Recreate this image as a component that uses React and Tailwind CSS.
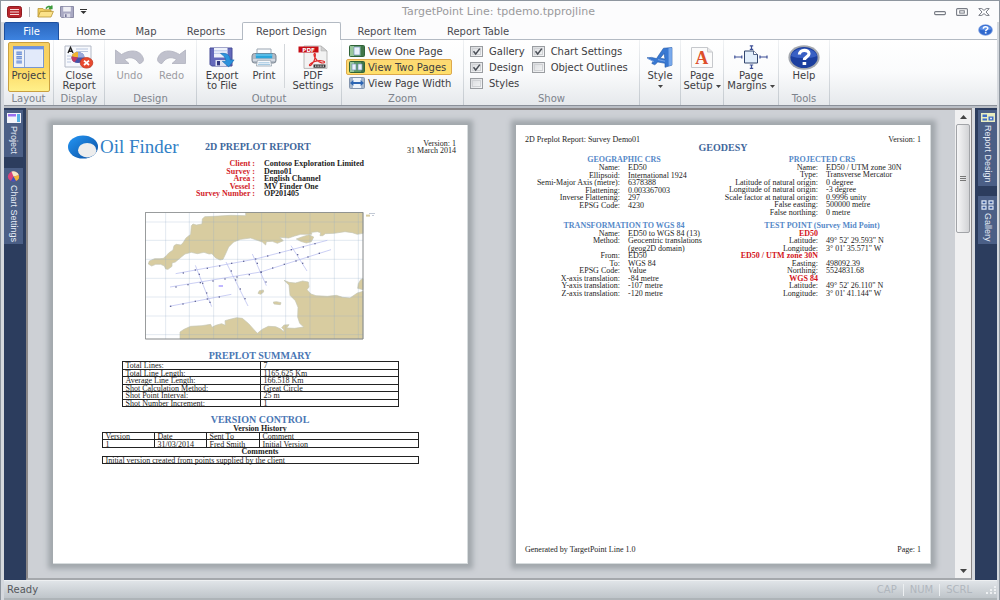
import React from 'react';

/* ---------- small building blocks ---------- */

function BigButton({ icon, label, second, active, disabled, menu, className = '' }) {
  return (
    <button
      type="button"
      disabled={disabled}
      className={`flex h-[50px] flex-col items-center rounded-xs border text-[10px] leading-[10px] ${
        active
          ? 'border-[#c9a040] bg-linear-to-b from-[#f6cf62] via-[#fbd65f] to-[#fff08a]'
          : 'border-transparent'
      } ${disabled ? 'text-[#9c9ca2]' : 'text-[#3d3d42]'} ${className}`}
    >
      <span className="flex h-[28px] items-center justify-center">{icon}</span>
      <span className="whitespace-nowrap">{label}</span>
      {second && (
        <span className="flex items-center gap-[3px] whitespace-nowrap">
          {second}
          {menu && <Caret />}
        </span>
      )}
      {!second && menu && (
        <span className="flex h-[10px] items-center">
          <Caret />
        </span>
      )}
    </button>
  );
}

function Caret() {
  return (
    <svg width="5" height="3" viewBox="0 0 5 3" aria-hidden="true">
      <path d="M0 0h5L2.5 3z" fill="#444" />
    </svg>
  );
}

function Group({ title, className, children }) {
  return (
    <section className="flex shrink-0">
      <div className={`flex flex-col items-center pt-[2px] ${className}`}>
        <div className="flex h-[51px] w-full justify-center">{children}</div>
        <h2 className="text-[10px] leading-[12px] text-[#7d838c]">{title}</h2>
      </div>
      <div className="w-px bg-linear-to-b from-[#f0f2f4] to-[#c3c9cf]" />
    </section>
  );
}

function Check({ label, checked }) {
  return (
    <label className="flex h-4 items-center gap-[6px] whitespace-nowrap">
      <span className="relative flex">
        <input
          type="checkbox"
          defaultChecked={checked}
          className="peer h-[11px] w-[13px] appearance-none border border-[#9a9da1] bg-linear-to-br from-[#d9dbde] to-[#f6f7f8] outline-1 -outline-offset-3 outline-[#d0d2d5]"
        />
        <svg
          viewBox="0 0 13 11"
          className="pointer-events-none absolute inset-0 hidden h-[11px] w-[13px] peer-checked:block"
        >
          <path d="M3.5 5.2 5.7 8 9.8 2.6" fill="none" stroke="#4a4f57" strokeWidth="1.5" />
        </svg>
      </span>
      {label}
    </label>
  );
}

function ViewRow({ icon, label, active }) {
  return (
    <button
      type="button"
      className={`flex h-4 items-center gap-[3px] self-start rounded-xs border pr-[5px] pl-[2px] whitespace-nowrap ${
        active
          ? 'border-[#dda94c] bg-linear-to-b from-[#fcd873] to-[#ffe06a]'
          : 'border-transparent'
      }`}
    >
      {icon}
      {label}
    </button>
  );
}

/* ---------- icons ---------- */

const AppIcon = () => (
  <svg width="15" height="12" viewBox="0 0 15 12">
    <rect x=".5" y=".5" width="14" height="11" rx="2" fill="#b8252c" stroke="#8f1a20" />
    <path d="M3 3.5h9M3 6h9M3 8.5h9" stroke="#f6dcdc" strokeWidth="1.2" />
  </svg>
);

const OpenIcon = () => (
  <svg width="17" height="13" viewBox="0 0 17 13">
    <path d="M1 12V3.5h5l1.2 1.3H14V7" fill="#f1cf62" stroke="#b89434" strokeWidth=".8" />
    <path d="M1 12 3.4 6.4h13L14 12z" fill="#fbe28a" stroke="#b89434" strokeWidth=".8" />
    <path d="M9 3.6C10.5 1 13 1 14 2.4M14.8.4v3h-3" fill="none" stroke="#3c9a3c" strokeWidth="1.6" />
  </svg>
);

const SaveIcon = () => (
  <svg width="14" height="12" viewBox="0 0 14 12">
    <path d="M.5.5h13v11h-12l-1-1z" fill="#a9a9c3" stroke="#8b8ba6" />
    <path d="M3.2.8h7.6v4.7H3.2z" fill="#f0f0f5" />
    <path d="M3.8 7.6h6.4v3.8H3.8z" fill="#dcdce8" />
    <path d="M5 8.3h1.6v2.6H5z" fill="#77779a" />
  </svg>
);

const ProjectIcon = () => (
  <svg width="31" height="22" viewBox="0 0 31 22">
    <rect x=".5" y=".5" width="30" height="21" fill="#f4f7fc" stroke="#7896cf" />
    <path d="M1 1h29v2.4H1z" fill="#6a93e6" />
    <path d="M1.5 4h9v17h-9z" fill="#eef1f5" />
    <path d="M11.5 4v17" stroke="#90a8d4" />
    <path d="M12 4h17.5v17H12z" fill="#e2eafa" />
    <path d="M3.4 5.5h5.5v3.4H3.4zM3.4 10h5.5v3.2H3.4zM3.4 14.4h5.5v3H3.4z" fill="#6f92d8" />
    <path d="M3.4 7.2h5.5M3.4 11.6h5.5M3.4 16h5.5" stroke="#c9d8f4" strokeWidth=".6" />
  </svg>
);

const CloseReportIcon = () => (
  <svg width="30" height="24" viewBox="0 0 30 24">
    <path d="M1 1h26v21H1z" fill="#f7f9fd" stroke="#b3b9c6" />
    <path d="m4 8 2.5-5.500L9 8M4.800 6.300h3.500" fill="none" stroke="#222" strokeWidth="1.4" />
    <path d="M12 4h12M12 6.5h12M3 11h4M3 14h4M3 17h4" stroke="#b9c6de" />
    <ellipse cx="14" cy="12.5" rx="6.5" ry="5.6" fill="#4753a6" />
    <path d="M14 12.5V6.9a6.5 5.6 0 0 1 6.5 5.6z" fill="#9aa9da" />
    <path d="m14 12.5-6.4-1a6.5 5.6 0 0 1 6.4-4.6z" fill="#f2b52f" />
    <path d="m14 12.5-3.5 4.8a6.5 5.6 0 0 1-2.9-5.8z" fill="#c43b63" />
    <ellipse cx="22.5" cy="17.8" rx="6.3" ry="5.3" fill="#e8492f" stroke="#c1371f" strokeWidth=".8" />
    <path d="m20 15.6 5 4.4m0-4.4-5 4.4" stroke="#fff" strokeWidth="1.8" />
  </svg>
);

const UndoIcon = ({ flip }) => (
  <svg width="29" height="16" viewBox="0 0 29 16" className={flip ? '-scale-x-100' : ''}>
    <path
      d="M.5 1v13.500H14L9.500 10.500C14 7.500 20 8 24 14.500c1.500.5 4.500-1.500 4.500-4C27 2 17-1 6.500 5.500z"
      fill="#c0c1cd"
      stroke="#b0b1be"
      strokeWidth=".8"
    />
  </svg>
);

const ExportIcon = () => (
  <svg width="26" height="21" viewBox="0 0 26 21">
    <path d="M1 1h22v18H2.6L1 17.4z" fill="#6469bb" stroke="#474c96" />
    <path d="M5 1h13.5v9.5H5z" fill="#eef2fb" />
    <path d="M5 3.8h13.5M5 6.4h13.5" stroke="#b9c7ea" />
    <path d="M6.5 13h11v6h-11z" fill="#dfe3f2" />
    <path d="M8 14h3v4.4H8z" fill="#353a82" />
    <path d="M11.5 6.5c6-.8 9.6 1.5 9.8 6.4h3.8l-5.4 7-6.4-5.6h3.5c0-3-1.4-5.4-5.3-7.8z" fill="#2c93dd" stroke="#1b6cae" strokeWidth=".6" />
  </svg>
);

const PrintIcon = () => (
  <svg width="26" height="19" viewBox="0 0 26 19">
    <path d="M6 1h14v7H6z" fill="#fafcfe" stroke="#9aa5b1" />
    <rect x="1" y="5.5" width="24" height="9.5" rx="2.5" fill="#b1bac5" stroke="#7d8793" />
    <path d="M4.8 5.7h16.4v4.6H4.8z" fill="#2aa6dc" />
    <path d="M4.8 7h16.4" stroke="#85d2f2" />
    <path d="M2 12h22" stroke="#e5e9ee" strokeWidth="1.4" />
    <path d="m6.4 12.3-1 5.7h15.2l-1-5.7z" fill="#f6f8fb" stroke="#98a3af" strokeWidth=".8" />
    <path d="M7.5 14.8h11M7 16.6h12" stroke="#9cc4df" />
  </svg>
);

const PdfIcon = () => (
  <svg width="31" height="24" viewBox="0 0 31 24">
    <path d="M6 1h17l6 5v17.4H6z" fill="#f2f2f2" stroke="#aaa" strokeWidth=".8" />
    <path d="m23 1 6 5h-6z" fill="#cfcfcf" stroke="#aaa" strokeWidth=".5" />
    <path d="M.5 1.5h20v6H.5z" fill="#c60d14" />
    <text x="10.6" y="6.6" textAnchor="middle" fontSize="5.6" fontWeight="700" fill="#fff">PDF</text>
    <path
      d="M16.5 8.6c-1.5 1 .1 4 2.5 6.8 2.2 2.4 7.2 3.4 7.6 1.8.4-1.7-6-1.9-9.6-.8-3 1-6.2 3-5.5 4 .9 1.3 4-2.4 5.1-6 .8-2.8 1.2-6.6-.1-5.8z"
      fill="none"
      stroke="#e02a2a"
      strokeWidth="1.2"
    />
    <path d="M15.5 19.5h12v3.2h-12z" fill="#333" />
    <path d="M17 21.2h9.2" stroke="#ddd" strokeWidth="1.2" strokeDasharray="1 .6" />
  </svg>
);

const OnePageIcon = ({ two }) => (
  <svg width="16" height="12" viewBox="0 0 16 12">
    <rect x=".5" y=".5" width="15" height="11" rx="1" fill="#5b9a62" stroke="#2f6238" />
    <path d="M1 1h4v10H1z" fill="#98c79b" />
    <path d="M12 1h3v10h-3z" fill="#3f7548" />
    {two ? (
      <path d="M3 3h4v6H3zM9 3h4v6H9z" fill="#eaf1fa" stroke="#7a93bb" strokeWidth=".7" />
    ) : (
      <path d="M5 2h6v8H5z" fill="#eaf1fa" stroke="#7a93bb" strokeWidth=".7" />
    )}
  </svg>
);

const PageWidthIcon = () => (
  <svg width="16" height="12" viewBox="0 0 16 12">
    <rect x=".5" y=".5" width="15" height="11" rx="1" fill="#a6b7cd" stroke="#8294ad" />
    <path d="M4 1h8v10H4z" fill="#edf3fb" />
    <path d="M1 6l3.4-3v2h7.2V3L15 6l-3.4 3V7H4.4v2z" fill="#2d66b4" />
  </svg>
);

const StyleIcon = () => (
  <svg width="28" height="21" viewBox="0 0 28 21">
    <path d="M17.5 1.2 26 .6v17.5l-7 2.2v-4L11.8 15l-3 2.8-3-1.4L7.2 14 1 10.8l4.5-.4 5 1.2zM18 6.4l-3.8 4.8 4.8.9z" fill="#3878d2" stroke="#2258a6" strokeWidth=".6" />
    <path d="m22.5 1.2 3.4-.5v17.4l-3.2 1z" fill="#79a9eb" />
    <path d="M2 11.6l6 3M12 12.6l7 1.6" stroke="#78a4e6" />
  </svg>
);

const SetupIcon = () => (
  <svg width="22" height="21" viewBox="0 0 22 21">
    <path d="M.5.5h16l5 4.5v15.5H.5z" fill="#fbfbfb" stroke="#c6c8cc" />
    <path d="M16.5.5v4.5h5" fill="#e7e8ea" stroke="#c6c8cc" />
    <text x="10.7" y="17.4" textAnchor="middle" fontSize="18" fontWeight="700" fill="#dd4f2a" className="font-['Liberation_Serif',serif]">A</text>
  </svg>
);

const MarginsIcon = () => (
  <svg width="34" height="24" viewBox="0 0 34 24">
    <path d="M10.5 6h9l4 3.5V18h-13z" fill="#e3effb" stroke="#33466e" />
    <path d="M19.5 6v3.5h4" fill="#fff" stroke="#33466e" strokeWidth=".8" />
    <path d="M17.5 .8v3.6M15.8.8h3.4M15.8 4.4h3.4M17.5 20v3.4M15.8 20h3.4M15.8 23.4h3.4M.8 12h7M.8 10.6v2.8M7.8 10.6v2.8M26 12h7M26 10.6v2.8M33 10.6v2.8" stroke="#3d4f96" strokeWidth="1.2" />
  </svg>
);

const HelpIcon = ({ small }) => (
  <svg width={small ? 15 : 32} height={small ? 12 : 25} viewBox="0 0 32 25">
    <ellipse cx="16" cy="12.5" rx="15.6" ry="12.2" fill={small ? '#7d9fe0' : '#a3a7ae'} />
    <ellipse cx="16" cy="12.5" rx="13.6" ry="10.6" fill={small ? '#2f68ce' : '#1c3f9f'} />
    <path d="M3 11C5 1 27 1 29 11 22 14 10 14 3 11z" fill={small ? '#5c8fe6' : '#3960c4'} />
    <path d="M11.4 9.6c0-5.4 9.6-5.4 9.6-.8 0 3.2-4.6 2.8-4.6 6.2" fill="none" stroke="#fff" strokeWidth="3.2" />
    <path d="M14.6 17h3.6v3h-3.6z" fill="#fff" />
  </svg>
);

const ChartBall = () => (
  <svg width="13" height="11" viewBox="0 0 12 11" className="shrink-0">
    <ellipse cx="6" cy="5.5" rx="5.6" ry="5.1" fill="#d9447c" />
    <path d="M6 5.5 4 .6a5.6 5.1 0 0 1 7.4 3.6z" fill="#f4e9c8" />
    <path d="m6 5.5 5.4-1.3a5.6 5.1 0 0 1-3 5.8z" fill="#f0b63a" />
    <path d="m6 5.5 2.4 4.5a5.6 5.1 0 0 1-5 0z" fill="#3b55bd" />
  </svg>
);

/* ---------- side docks ---------- */

function DockTab({ icon, label, className }) {
  return (
    <button
      type="button"
      className={`flex w-[19px] flex-col items-center bg-[#4b5f86] text-[9px] leading-none text-[#e6ecf6] ${className}`}
    >
      {icon}
      <span className="font-['Liberation_Sans',sans-serif] whitespace-nowrap [writing-mode:vertical-rl]">
        {label}
      </span>
    </button>
  );
}

/* ---------- report pages ---------- */

function Sheet({ children, label }) {
  return (
    <article
      aria-label={label}
      className="flex flex-1 flex-col border-r border-b border-[#d7dcde] bg-white text-[8px] leading-[7px] text-[#1c1c1c] shadow-[0_0_5px_5px_#a2a8ad] font-['Liberation_Serif',serif]"
    >
      {children}
    </article>
  );
}

function Rows({ rows, className }) {
  return (
    <dl className={`grid auto-rows-fr ${className}`}>
      {rows.map(([k, v, section], i) => (
        <div key={i} className="grid grid-cols-[95px_1fr] gap-2 whitespace-nowrap">
          <dt className={`text-right ${section ? 'font-bold text-[#d3131b]' : ''}`}>
            <span className="float-right">{k}</span>
          </dt>
          <dd>{v}</dd>
        </div>
      ))}
    </dl>
  );
}

const SURVEY = [
  ['Client :', 'Contoso Exploration Limited'],
  ['Survey :', 'Demo01'],
  ['Area :', 'English Channel'],
  ['Vessel :', 'MV Finder One'],
  ['Survey Number :', 'OP201405'],
];

const SUMMARY = [
  ['Total Lines:', '7'],
  ['Total Line Length:', '1165.625 Km'],
  ['Average Line Length:', '166.518 Km'],
  ['Shot Calculation Method:', 'Great Circle'],
  ['Shot Point Interval:', '25 m'],
  ['Shot Number Increment:', '1'],
];

const LINES = [
  [135, 222, 375, 178], [375, 178, 590, 122], [118, 262, 390, 217], [390, 217, 601, 150],
  [116, 320, 302, 284], [194, 197, 243, 321], [286, 187, 352, 319], [365, 163, 407, 258],
  [481, 138, 529, 214],
];

const SHOTS = [
  [158, 220], [194, 211], [230, 206], [267, 199], [303, 191], [339, 185], [375, 178], [411, 169],
  [447, 159], [482, 150], [518, 142], [553, 132], [136, 262], [172, 255], [209, 249], [247, 244],
  [283, 238], [319, 232], [356, 225], [391, 217], [426, 205], [461, 194], [496, 184], [532, 172],
  [566, 161], [120, 320], [157, 313], [194, 305], [230, 298], [266, 292], [206, 224], [216, 251],
  [228, 280], [238, 308], [302, 214], [315, 241], [329, 268], [343, 297], [380, 191], [392, 218],
  [406, 247], [501, 165], [516, 191],
];

function SurveyMap() {
  return (
    <svg width="219" height="128" viewBox="43 37 657 384" role="img" aria-label="Survey area map">
      <path d="M44 38h653v380H44z" fill="#fff" />
      <g fill="#d8cca0" stroke="#c4c5b4" strokeWidth="2">
        <path d="M345 38v10L300 47 250 50 222 51 215 58 214 73 197 76 187 73 182 78 180 104 166 115 158 128 151 136 137 134 130 138 127 151 114 160 107 168 98 176 88 177 72 177 56 184 53 193 63 199 75 194 90 194 101 199 105 208 112 209 124 200 124 190 134 187 152 172 163 163 182 158 200 162 220 158 235 163 244 162 254 174 268 181 277 179 286 160 294 142 309 127 330 119 360 115 380 122 395 127 405 136 407 126 425 125 440 131 458 123 447 113 474 115 492 109 510 104 543 104 543 98 560 96 570 99 568 108 576 108 584 102 610 101 643 96 665 99 680 104 697 101V38z" />
        <path d="M497 118 516 111 535 105 549 112 542 126 527 130 510 125z" />
        <path d="M382 281 386 273 398 271 399 277 390 284zM428 307 438 306 451 309 449 315 430 313z" />
        <path d="M697 237 690 240 683 252 681 266 697 270z" />
        <path d="M460 242 475 248 494 250 516 244 533 247 535 262 529 270 541 283 556 288 590 290 617 287 636 293 658 295 680 280 697 275V418H148V397L160 389 180 380 214 378 240 374 244 383 255 377 273 372 284 377 283 363 298 359 318 354 335 356 354 372 370 390 380 401 395 389 413 380 435 381 450 388 460 397 459 389 453 384 460 376 475 375 468 385 492 386 519 382 507 371 501 352 502 323 494 303 478 287 475 256z" />
      </g>
      <path
        d="M105 38v380M176 38v380M249 38v380M321 38v380M393 38v380M465 38v380M538 38v380M611 38v380M683 38v380M44 67h653M44 122h653M44 179h653M44 236h653M44 292h653M44 349h653M44 405h653"
        stroke="#8fabc5"
        strokeOpacity=".4"
        strokeWidth="2"
      />
      {LINES.map(([x1, y1, x2, y2], i) => (
        <line key={i} x1={x1} y1={y1} x2={x2} y2={y2} stroke="#b0b7ee" strokeWidth="2" />
      ))}
      {SHOTS.map(([x, y], i) => (
        <rect key={i} x={x - 2} y={y - 2} width="4" height="4" fill="#666a9a" />
      ))}
      <path d="M264 259h13" stroke="#a193ff" strokeWidth="4" />
      <path d="M44 38h653v380H44z" fill="none" stroke="#85888a" strokeWidth="3" />
    </svg>
  );
}

const CELL = 'border border-[#222] pt-px pr-0 pb-0 pl-[3px] text-left font-normal leading-[5px]';

function SummaryPage() {
  return (
    <Sheet label="Preplot report">
      <header className="flex items-center pt-[10px] pr-[11px] pl-[15px]">
        <div className="flex w-[137px] items-center gap-[2px]">
          <svg width="30" height="24" viewBox="0 0 30 24" aria-hidden="true">
            <defs>
              <linearGradient id="ball" x1="0" y1="0" x2="1" y2="1">
                <stop offset="0" stopColor="#2496f5" />
                <stop offset="1" stopColor="#0b4fa0" />
              </linearGradient>
            </defs>
            <ellipse cx="15" cy="12" rx="15" ry="11.5" fill="url(#ball)" />
            <ellipse cx="19.2" cy="15.2" rx="9.2" ry="7.3" fill="#ededed" />
          </svg>
          <span className="text-[19px] leading-[22px] whitespace-nowrap text-[#3180c6]">Oil Finder</span>
        </div>
        <h1 className="text-[10px] leading-[10px] font-bold whitespace-nowrap text-[#3f679c]">2D PREPLOT REPORT</h1>
        <p className="flex-1 text-right whitespace-nowrap">
          Version: 1<br />
          31 March 2014
        </p>
      </header>

      <dl className="mt-px grid h-[38px] auto-rows-fr font-bold">
        {SURVEY.map(([k, v]) => (
          <div key={k} className="grid grid-cols-[202px_1fr] gap-[9px] whitespace-nowrap">
            <dt className="text-right text-[#d3232a]">{k}</dt>
            <dd>{v}</dd>
          </div>
        ))}
      </dl>

      <figure className="mt-[14px] flex justify-center gap-[2px]">
        <SurveyMap />
        <svg width="9" height="7" viewBox="0 0 9 7" aria-hidden="true">
          <path d="M3 1.5h6M6 3.5h2" stroke="#a9b3c4" strokeWidth=".7" />
          <path d="M0 2.6h4v2H0z" fill="#d8cca0" />
        </svg>
      </figure>

      <section className="mt-[11px] flex flex-col items-center">
        <h2 className="text-[10px] leading-[10px] font-bold text-[#4a76b4]">PREPLOT SUMMARY</h2>
        <table className="h-[46px] w-[277px] table-fixed border-collapse">
          <tbody>
            {SUMMARY.map(([k, v]) => (
              <tr key={k}>
                <th scope="row" className={CELL}>{k}</th>
                <td className={CELL}>{v}</td>
              </tr>
            ))}
          </tbody>
        </table>
      </section>

      <section className="mt-2 flex flex-col items-center">
        <h2 className="text-[10px] leading-[10px] font-bold text-[#4a76b4]">VERSION CONTROL</h2>
        <h3 className="leading-[7px] font-bold">Version History</h3>
        <table className="h-[16px] w-[317px] table-fixed border-collapse">
          <colgroup>
            <col className="w-[52px]" />
            <col className="w-[52px]" />
            <col className="w-[53px]" />
            <col />
          </colgroup>
          <thead>
            <tr>
              <th className={CELL}>Version</th>
              <th className={CELL}>Date</th>
              <th className={CELL}>Sent To</th>
              <th className={CELL}>Comment</th>
            </tr>
          </thead>
          <tbody>
            <tr>
              <td className={CELL}>1</td>
              <td className={CELL}>31/03/2014</td>
              <td className={CELL}>Fred Smith</td>
              <td className={CELL}>Initial Version</td>
            </tr>
          </tbody>
        </table>
        <h3 className="leading-[8px] font-bold">Comments</h3>
        <p className={`w-[317px] ${CELL}`}>
          Initial version created from points supplied by the client
        </p>
      </section>
    </Sheet>
  );
}

function GeodesyPage() {
  const heading = 'text-center text-[8px] leading-[8px] font-bold text-[#5588c8]';
  return (
    <Sheet label="Geodesy">
      <header className="pt-[11px] pr-[9px] pl-[9px]">
        <div className="flex justify-between">
          <span>2D Preplot Report: Survey Demo01</span>
          <span>Version: 1</span>
        </div>
        <h1 className="text-center text-[10px] leading-[10px] font-bold text-[#3f679c]">GEODESY</h1>
      </header>
      <div className="mt-[3px] grid flex-1 grid-cols-2 content-start gap-y-[6px] px-[9px]">
        <section className="h-[60px]">
          <h2 className={heading}>GEOGRAPHIC CRS</h2>
          <Rows
            className="h-[45px]"
            rows={[
              ['Name:', 'ED50'],
              ['Ellipsoid:', 'International 1924'],
              ['Semi-Major Axis (metre):', '6378388'],
              ['Flattening:', '0.003367003'],
              ['Inverse Flattening:', '297'],
              ['EPSG Code:', '4230'],
            ]}
          />
        </section>
        <section className="h-[60px]">
          <h2 className={heading}>PROJECTED CRS</h2>
          <Rows
            className="h-[52px]"
            rows={[
              ['Name:', 'ED50 / UTM zone 30N'],
              ['Type:', 'Transverse Mercator'],
              ['Latitude of natural origin:', '0 degree'],
              ['Longitude of natural origin:', '-3 degree'],
              ['Scale factor at natural origin:', '0.9996 unity'],
              ['False easting:', '500000 metre'],
              ['False northing:', '0 metre'],
            ]}
          />
        </section>
        <section>
          <h2 className={heading}>TRANSFORMATION TO WGS 84</h2>
          <Rows
            className="h-[67px]"
            rows={[
              ['Name:', 'ED50 to WGS 84 (13)'],
              ['Method:', 'Geocentric translations'],
              ['', '(geog2D domain)'],
              ['From:', 'ED50'],
              ['To:', 'WGS 84'],
              ['EPSG Code:', 'Value'],
              ['X-axis translation:', '-84 metre'],
              ['Y-axis translation:', '-107 metre'],
              ['Z-axis translation:', '-120 metre'],
            ]}
          />
        </section>
        <section>
          <h2 className={heading}>TEST POINT (Survey Mid Point)</h2>
          <Rows
            className="h-[67px]"
            rows={[
              ['ED50', '', true],
              ['Latitude:', '49° 52\' 29.593" N'],
              ['Longitude:', '3° 01\' 35.571" W'],
              ['ED50 / UTM zone 30N', '', true],
              ['Easting:', '498092.39'],
              ['Northing:', '5524831.68'],
              ['WGS 84', '', true],
              ['Latitude:', '49° 52\' 26.110" N'],
              ['Longitude:', '3° 01\' 41.144" W'],
            ]}
          />
        </section>
      </div>
      <footer className="flex justify-between pr-[9px] pb-[10px] pl-[9px]">
        <span>Generated by TargetPoint Line 1.0</span>
        <span>Page: 1</span>
      </footer>
    </Sheet>
  );
}

/* ---------- window ---------- */

const TABS = [
  ['Home', 'w-[62px]'],
  ['Map', 'w-[48px]'],
  ['Reports', 'w-[72px]'],
  ['Report Design', 'w-[99px]'],
  ['Report Item', 'w-[92px]'],
  ['Report Table', 'w-[90px]'],
];

function TitleBar() {
  return (
    <header className="grid h-[22px] grid-cols-[1fr_auto_1fr] items-center border-t border-[#8e969f] pr-[9px] pl-[6px]">
      <div className="flex items-center gap-[6px]">
        <AppIcon />
        <span className="mx-px h-[10px] w-px bg-[#b5b8bd]" />
        <button type="button" aria-label="Open"><OpenIcon /></button>
        <button type="button" aria-label="Save"><SaveIcon /></button>
        <button type="button" aria-label="Customize toolbar">
          <svg width="7" height="5" viewBox="0 0 7 5"><path d="M0 .5h7" stroke="#333" /><path d="M.5 2h6L3.500 5z" fill="#333" /></svg>
        </button>
      </div>
      <h1 className="text-[11px] leading-[12px] text-[#9a9a9c]">TargetPoint Line: tpdemo.tpprojline</h1>
      <div className="flex items-center justify-end gap-[10px]">
        <button type="button" aria-label="Minimize">
          <svg width="12" height="8" viewBox="0 0 12 8"><rect x=".6" y="3.600" width="10.800" height="3" rx="1" fill="#fff" stroke="#777b84" strokeWidth="1.1" /></svg>
        </button>
        <button type="button" aria-label="Restore">
          <svg width="12" height="8" viewBox="0 0 12 8"><rect x=".6" y=".6" width="10.800" height="6.800" rx="1" fill="#fff" stroke="#777b84" strokeWidth="1.1" /><rect x="3.700" y="2.800" width="4.600" height="2.300" fill="none" stroke="#777b84" /></svg>
        </button>
        <button type="button" aria-label="Close">
          <svg width="12" height="8" viewBox="0 0 12 8"><path d="M.8.6h3L6 2.400 8.200.6h3L8 4l3.200 3.400h-3L6 5.600 3.800 7.400h-3L4 4z" fill="#fff" stroke="#777b84" /></svg>
        </button>
      </div>
    </header>
  );
}

function TabStrip() {
  return (
    <nav className="flex h-[18px] text-[10px] leading-[17px] text-[#4a4a50] shadow-[inset_0_-1px_0_#b3bac3]">
      <button
        type="button"
        className="mr-px w-[55px] rounded-t-xs border border-b-0 border-[#1d4f9e] bg-linear-to-b from-[#2c67bd] to-[#3d83e0] text-white"
      >
        File
      </button>
      {TABS.map(([name, width]) => (
        <button
          type="button"
          key={name}
          className={`${width} whitespace-nowrap ${
            name === 'Report Design' ? 'rounded-t-xs border border-b-0 border-[#b3bac3] bg-white' : ''
          }`}
        >
          {name}
        </button>
      ))}
      <button type="button" aria-label="Help" className="mr-[4px] ml-auto pb-[3px]">
        <HelpIcon small />
      </button>
    </nav>
  );
}

function Ribbon() {
  return (
    <div className="flex h-[66px] overflow-hidden border-b border-[#8a9099] bg-linear-to-b from-white via-[#fafbfc] to-[#e6e9ec] text-[10px] text-[#3d3d42]">
      <Group title="Layout" className="w-[49px]">
        <BigButton active icon={<ProjectIcon />} label="Project" className="w-[42px]" />
      </Group>
      <Group title="Display" className="w-[50px]">
        <BigButton icon={<CloseReportIcon />} label="Close" second="Report" />
      </Group>
      <Group title="Design" className="w-[91px]">
        <BigButton disabled icon={<UndoIcon />} label="Undo" className="w-[42px]" />
        <BigButton disabled icon={<UndoIcon flip />} label="Redo" className="w-[42px]" />
      </Group>
      <Group title="Output" className="w-[144px]">
        <BigButton icon={<ExportIcon />} label="Export" second="to File" className="w-[44px]" />
        <BigButton icon={<PrintIcon />} label="Print" className="w-[40px]" />
        <span className="mt-[2px] mr-[3px] h-[44px] w-px bg-[#d3d7db]" />
        <BigButton icon={<PdfIcon />} label="PDF" second="Settings" className="w-[50px]" />
      </Group>
      <Group title="Zoom" className="w-[121px]">
        <div className="flex w-full flex-col pt-px pl-[4px]">
          <ViewRow icon={<OnePageIcon />} label="View One Page" />
          <ViewRow active icon={<OnePageIcon two />} label="View Two Pages" />
          <ViewRow icon={<PageWidthIcon />} label="View Page Width" />
        </div>
      </Group>
      <Group title="Show" className="w-[175px]">
        <div className="flex w-full gap-[7px] pt-px pl-[6px]">
          <div>
            <Check label="Gallery" checked />
            <Check label="Design" checked />
            <Check label="Styles" />
          </div>
          <div>
            <Check label="Chart Settings" checked />
            <Check label="Object Outlines" />
          </div>
        </div>
      </Group>
      <Group className="w-[40px]">
        <BigButton menu icon={<StyleIcon />} label="Style" />
      </Group>
      <Group className="w-[42px]">
        <BigButton menu icon={<SetupIcon />} label="Page" second="Setup" />
      </Group>
      <Group className="w-[54px]">
        <BigButton menu icon={<MarginsIcon />} label="Page" second="Margins" />
      </Group>
      <Group title="Tools" className="w-[50px]">
        <BigButton icon={<HelpIcon />} label="Help" />
      </Group>
    </div>
  );
}

function ScrollBar() {
  return (
    <div className="flex w-4 flex-col items-center bg-[#f0f0f1]">
      <button type="button" aria-label="Scroll up" className="flex h-[14px] w-full items-center justify-center">
        <svg width="7" height="4" viewBox="0 0 7 4"><path d="M3.500 0 7 4H0z" fill="#444" /></svg>
      </button>
      <div className="flex h-[109px] w-[14px] flex-col items-center justify-center gap-px rounded-xs border border-[#a2a4a8] bg-linear-to-r from-[#f6f6f7] to-[#d2d3d6]">
        <span className="h-px w-[6px] bg-[#777]" />
        <span className="h-px w-[6px] bg-[#777]" />
        <span className="h-px w-[6px] bg-[#777]" />
      </div>
      <button type="button" aria-label="Scroll down" className="mt-auto flex h-[14px] w-full items-center justify-center">
        <svg width="7" height="4" viewBox="0 0 7 4"><path d="M3.500 4 7 0H0z" fill="#444" /></svg>
      </button>
    </div>
  );
}

export default function App() {
  return (
    <div className="flex min-h-screen flex-col border-x-[1px] border-[#8e969f] bg-[#fcfcfd] font-['DejaVu_Sans',sans-serif]">
      <TitleBar />
      <div className="flex flex-1 flex-col border-r-2 border-l-3 border-[#d5d9de]">
        <TabStrip />
        <Ribbon />
        <main className="flex flex-1 border-t-2 border-[#b9bec5] bg-[#cdd0d5]">
          <aside className="flex w-[22px] flex-col gap-[11px] bg-[#2c3d5e] pt-[2px]">
            <DockTab
              className="h-[47px] gap-[3px] pt-[3px]"
              label="Project"
              icon={
                <svg width="14" height="10" viewBox="0 0 14 10" className="shrink-0">
                  <path d="M0 0h14v10H0z" fill="#f2f4fb" />
                  <path d="M1 1h8v2.500H1z" fill="#9a6ff0" />
                  <path d="M10 1h3v8h-3z" fill="#56b1e4" />
                </svg>
              }
            />
            <DockTab className="h-[76px] gap-[3px] pt-[3px]" label="Chart Settings" icon={<ChartBall />} />
          </aside>
          <div className="flex flex-1 border-2 border-r border-[#8a8788] border-b-[#a5a8ac]">
            <div className="flex flex-1 gap-12 overflow-hidden pt-[15px] pr-6 pb-[14px] pl-[25px]">
              <SummaryPage />
              <GeodesyPage />
            </div>
            <ScrollBar />
          </div>
          <div className="w-[3px] bg-[#d8dbe0]" />
          <aside className="flex w-[22px] flex-col items-end gap-[10px] bg-[#2c3d5e] pt-[2px]">
            <DockTab
              className="h-[76px] gap-[3px] pt-[3px]"
              label="Report Design"
              icon={
                <svg width="14" height="9" viewBox="0 0 14 9" className="shrink-0">
                  <path d="M0 0h14v9H0z" fill="#e9edc0" />
                  <path d="M1.500 1.500h4.500v2.500H1.500zM1.500 5.500h4.500v2H1.500zM7.500 3.500h5v4h-5z" fill="#416ec5" />
                  <path d="M9 4.700h2v1.600H9z" fill="#dbe7fa" />
                </svg>
              }
            />
            <DockTab
              className="h-[48px] gap-[3px] pt-[4px]"
              label="Gallery"
              icon={
                <svg width="13" height="10" viewBox="0 0 13 10" className="shrink-0">
                  <path d="M1 .8h4v3H1zM8 .8h4v3H8zM1 6.200h4v3H1zM8 6.200h4v3H8z" fill="#37589c" stroke="#dce5f4" strokeWidth="1.200" />
                </svg>
              }
            />
          </aside>
        </main>
        <footer className="flex h-5 items-center border-t border-b-2 border-t-[#eef0f2] border-b-[#aeb4b8] bg-linear-to-b from-[#e0e4e8] to-[#bfc5ca] pl-[3px] text-[10px] leading-[12px] text-[#55585c]">
          <span>Ready</span>
          <div className="ml-auto flex items-center text-[#b0b6bd]">
            <span className="px-[6px]">CAP</span>
            <span className="border-l border-[#eceff1] px-[6px]">NUM</span>
            <span className="border-l border-[#eceff1] px-[6px]">SCRL</span>
            <svg width="12" height="10" viewBox="0 0 12 10" className="ml-[7px]" aria-hidden="true">
              <path d="M9 1h2v2H9zM9 4h2v2H9zM9 7h2v2H9zM5 4h2v2H5zM5 7h2v2H5zM1 7h2v2H1z" fill="#eef0f2" />
            </svg>
          </div>
        </footer>
      </div>
    </div>
  );
}
